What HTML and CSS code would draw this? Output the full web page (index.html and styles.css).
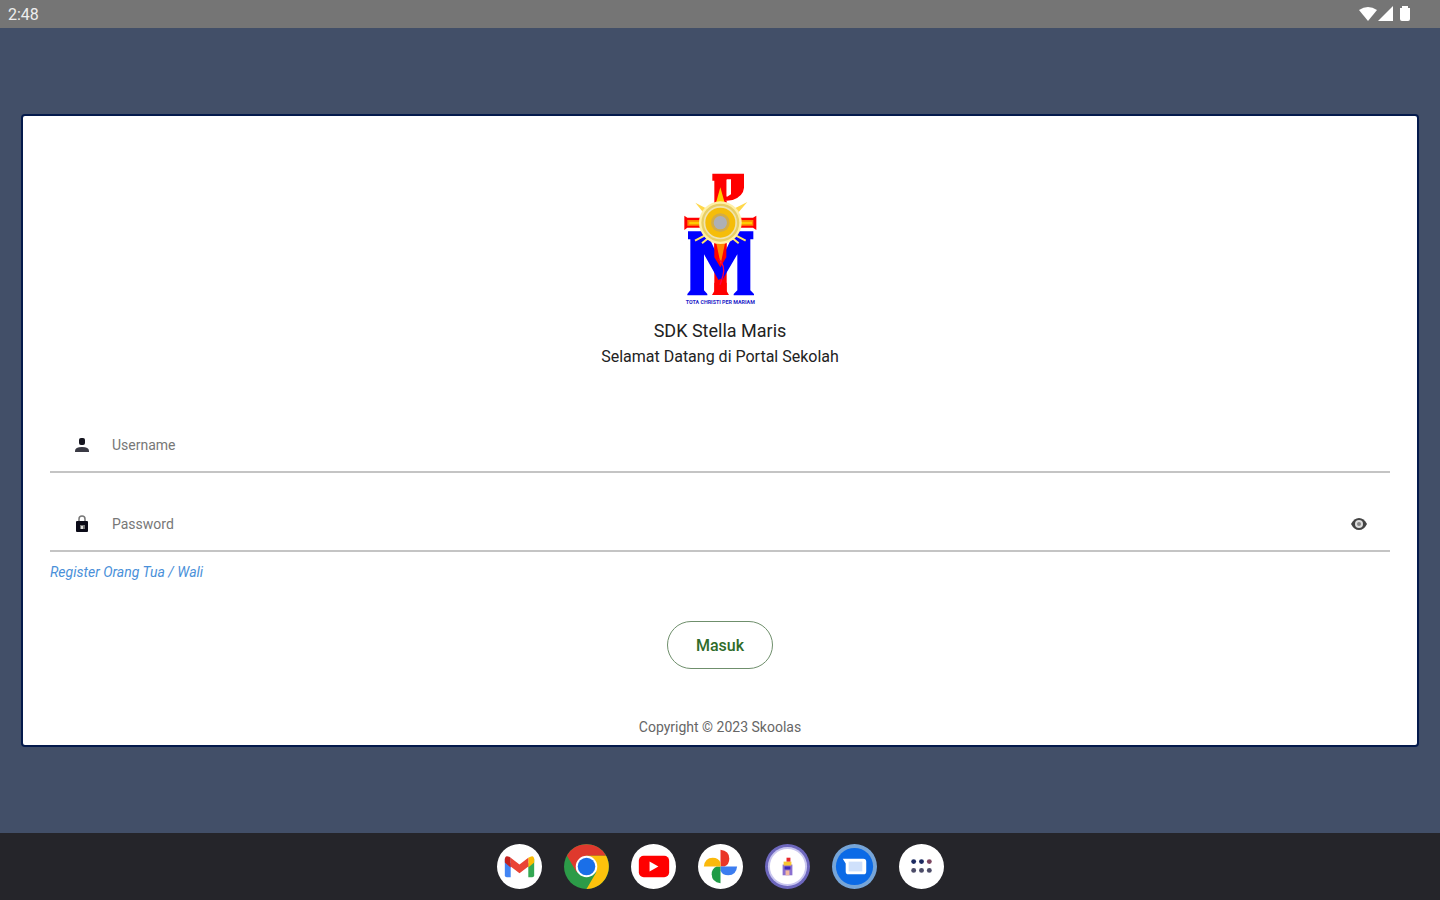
FILE: index.html
```html
<!DOCTYPE html>
<html lang="id">
<head>
  <meta charset="UTF-8" />
  <meta name="viewport" content="width=device-width, initial-scale=1.0" />
  <title>SDK Stella Maris</title>
  <link rel="stylesheet" href="styles.css">
</head>
<body>
  <header class="status-bar">
    <span>2:48</span>
    <svg class="status-icons" width="54" height="18" viewBox="0 0 54 18" fill="#fff">
      <path d="M1 5Q10-1 19 5L10 16z" />
      <path d="M35 1v15H20z" />
      <path d="M42 3h2V1h6v2h2v11q0 2-2 2h-6q-2 0-2-2z" />
    </svg>
  </header>

  <main>
    <form class="card">
      <svg class="logo" viewBox="69 36 222 408">
        <!-- cross and P -->
        <path fill="#f00" d="M157 41H252V83Q250 108 218 120L194 123V111Q210 106 211 94V60H200V400H163V62H157z" />
        <path fill="#fff" d="M200 58h13v45l-13 8z" />
        <path fill="#f00" d="M73 167l9 6h197l10-6v43l-10-7H82l-9 7z" />
        <path fill="#f80" d="M82 180h198v17H82z" />
        <path fill="#fc0" d="M88 185h188v8H88zM181 82l14 50h-28z" />
        <path fill="#ffd84a" d="M106 128l42 22-12 15zM262 126l-48 24 14 16z" />
        <!-- M -->
        <path fill="#00f" d="M84 214H139L181 306 224 214H280V238H271V391L282 402V406H221V402L232 391V283L181 370 132 283V391L142 402V406H82V402L91 391V238H84z" />
        <path fill="#f00" d="M163 246h36v46l-18 30-18-30zM163 369l18-13 19 13v24l7 12h-51l7-12z" />
        <path fill="#f80" d="M169 250h26l-13 62z" />
        <path d="M176 297q21 20 13 50-5 17-9 27" fill="none" stroke="#f04" stroke-width="4" />
        <!-- sun -->
        <path d="M105 242l30-16M126 250l22-18M257 242l-30-16M236 250l-22-18" stroke="#ffe36b" stroke-width="6" />
        <circle cx="181" cy="188" r="64" fill="#fff0a6" />
        <circle cx="181" cy="188" r="57" fill="#e8cf65" />
        <circle cx="181" cy="188" r="50" fill="#efe4b2" />
        <circle cx="181" cy="188" r="45" fill="#f5bd0a" />
        <circle cx="181" cy="188" r="28" fill="#d3ac45" />
        <circle cx="181" cy="188" r="20" fill="#aeb0b5" />
        <text class="motto" x="181" y="433" text-anchor="middle">TOTA CHRISTI PER MARIAM</text>
      </svg>
      <h1>SDK Stella Maris</h1>
      <p class="welcome">Selamat Datang di Portal Sekolah</p>

      <div class="field">
        <label for="username" aria-label="Username">
          <svg width="20" height="20" viewBox="0 0 20 20" fill="#15151f">
            <rect x="7" y="3" width="6" height="7" rx="2" />
            <path fill="#3a3a44" d="M3 17v-1q0-4 7-4t7 4v1z" />
          </svg>
        </label>
        <input type="text" id="username" placeholder="Username" />
      </div>
      <div class="field">
        <label for="password" aria-label="Password">
          <svg width="20" height="20" viewBox="0 0 20 20">
            <path d="M7 8V5q0-3 3-3t3 3v3" fill="none" stroke="#777" stroke-width="1.5" />
            <rect x="4" y="7" width="12" height="11" rx="1" fill="#0b0b18" />
            <path d="M8 11h5v4H8z" fill="#777" />
            <path d="M9 12h2v3H9z" fill="#ddd" />
          </svg>
        </label>
        <input type="password" id="password" placeholder="Password" />
        <button type="button" class="toggle" aria-label="Show password">
          <svg width="18" height="14" viewBox="0 0 18 14">
            <path d="M1 7Q4 1 9 1t8 6q-3 6-8 6T1 7z" fill="#444" />
            <circle cx="9" cy="7" r="4" fill="#ddd" />
            <circle cx="9" cy="7" r="2" fill="#888" />
          </svg>
        </button>
      </div>
      <a class="register" href="#">Register Orang Tua / Wali</a>
      <button type="button" class="submit">Masuk</button>
      <p class="copyright">Copyright © 2023 Skoolas</p>
    </form>
  </main>

  <nav class="dock">
    <a href="#" aria-label="Gmail">
      <svg viewBox="0 0 46 46">
        <circle cx="23" cy="23" r="23" fill="#fff" />
        <path fill="#4285f4" d="M8 15l6 5v14H10q-2 0-2-2z" />
        <path fill="#34a853" d="M32 20l6-5v17q0 2-2 2h-4z" />
        <path fill="#fbbc04" d="M32 14q6-4 6 2v3l-6 5z" />
        <path fill="#ea4335" d="M14 14l9 7 9-7v9l-9 7-9-7z" />
        <path fill="#c5221f" d="M14 14q-6-4-6 2v3l6 5z" />
      </svg>
    </a>
    <a href="#" aria-label="Chrome">
      <svg viewBox="0 0 46 46">
        <circle cx="23" cy="23" r="23" fill="#2c9b48" />
        <path fill="#df392d" d="M3 12A23 23 0 0 1 43 12H23L13 29z" />
        <path fill="#fcc20c" d="M23 12H43A23 23 0 0 1 23 46L33 29z" />
        <circle cx="23" cy="23" r="11" fill="#fff" />
        <circle cx="23" cy="23" r="9" fill="#1a6fe8" />
      </svg>
    </a>
    <a href="#" aria-label="YouTube">
      <svg viewBox="0 0 46 46">
        <circle cx="23" cy="23" r="23" fill="#fff" />
        <rect x="8" y="12" width="31" height="22" rx="5" fill="#f00" />
        <path fill="#fff" d="M19 18l9 5-9 5z" />
      </svg>
    </a>
    <a href="#" aria-label="Photos">
      <svg viewBox="0 0 46 46">
        <circle cx="23" cy="23" r="23" fill="#fff" />
        <path fill="#ea3527" d="M23 23V6q9 1 9 9 0 6-5 8z" />
        <path fill="#3c7df0" d="M23 23H40q-1 9-9 9-6 0-8-5z" />
        <path fill="#1e9b45" d="M23 23V40q-9-1-9-9 0-6 5-8z" />
        <path fill="#fbb90c" d="M23 23H6q1-9 9-9 6 0 8 5z" />
      </svg>
    </a>
    <a href="#" aria-label="Skoolas">
      <svg viewBox="0 0 46 46">
        <circle cx="23" cy="23" r="23" fill="#6d67bd" />
        <circle cx="23" cy="23" r="20" fill="#c9c6ef" />
        <circle cx="23" cy="23" r="18" fill="#fff" />
        <path fill="#8a6fd0" d="M18 21h10v11H18z" />
        <path fill="#3d29b8" d="M20 23h6v3h-6z" />
        <path fill="#f2b9a0" d="M21 27h4v5h-4z" />
        <path fill="#f8c630" d="M19 18h8v4h-8z" />
        <path fill="#e8262a" d="M22 14h4v4h-4z" />
      </svg>
    </a>
    <a href="#" aria-label="Messages">
      <svg viewBox="0 0 46 46">
        <circle cx="23" cy="23" r="23" fill="#76a5d8" />
        <circle cx="23" cy="23" r="19" fill="#0b6ae6" />
        <path fill="#fff" d="M11 15h21q3 0 3 3v10q0 3-3 3H17q-3 0-3-3v-8z" />
        <rect x="17" y="18" width="14" height="10" fill="#cfe0fb" />
      </svg>
    </a>
    <a href="#" aria-label="Apps">
      <svg viewBox="0 0 46 46">
        <circle cx="23" cy="23" r="23" fill="#fff" />
        <g fill="#1c2a60">
          <circle cx="15" cy="18" r="2.5" />
          <circle cx="23" cy="18" r="2.5" />
          <circle cx="31" cy="18" r="2.5" fill="#7c4560" />
        </g>
        <g fill="#4c4c68">
          <circle cx="15" cy="27" r="2.5" />
          <circle cx="23" cy="27" r="2.5" />
          <circle cx="31" cy="27" r="2.5" />
        </g>
      </svg>
    </a>
  </nav>
</body>
</html>
```

FILE: styles.css
```css
* { box-sizing: border-box; }
body {
  display: flex;
  flex-direction: column;
  min-height: 100vh;
  margin: 0;
  font-family: Roboto, sans-serif;
  background-color: #424f68;
}
svg { display: block; }
h1, p { margin: 0; }
.status-bar {
  display: flex;
  justify-content: space-between;
  align-items: center;
  height: 28px;
  padding: 0 28px 0 8px;
  font-size: 16px;
  color: #eee;
  background-color: #757575;
}
main {
  flex: 1;
  display: flex;
  align-items: center;
  padding: 23px;
}
.card {
  flex: 1;
  display: flex;
  flex-direction: column;
  align-items: center;
  padding: 56px 27px 8px;
  border-radius: 2px;
  background-color: #fff;
  box-shadow: 0 0 0 2px #041a4c;
}
.logo {
  width: 74px;
  height: 136px;
}
.motto {
  font-size: 16px;
  font-weight: bold;
  fill: #2222c8;
}
h1 {
  margin-top: 10px;
  font-size: 18px;
  font-weight: normal;
  line-height: 26px;
  color: #222;
}
.welcome {
  font-size: 16px;
  line-height: 26px;
  color: #222;
}
.field {
  display: flex;
  align-items: center;
  align-self: stretch;
  height: 55px;
  margin-bottom: 24px;
  padding: 0 22px;
  border-bottom: 2px solid #c4c4c4;
}
.welcome + .field { margin-top: 48px; }
.field label { margin-right: 20px; }
.field input {
  flex: 1;
  padding: 0;
  border: 0;
  outline: 0;
  font-family: inherit;
  font-size: 14px;
  color: #222;
  background: none;
}
.field input::placeholder { color: #777; }
.toggle {
  padding: 0;
  border: 0;
  background: none;
}
.register {
  align-self: flex-start;
  margin-top: -14px;
  font-size: 14px;
  font-style: italic;
  line-height: 20px;
  color: #4a90d9;
  text-decoration: none;
}
.submit {
  width: 106px;
  height: 48px;
  margin: 39px 0 48px;
  border: 1px solid #6f8f6c;
  border-radius: 24px;
  font-family: inherit;
  font-size: 16px;
  font-weight: 500;
  color: #2f6b2a;
  background: none;
}
.copyright {
  font-size: 14px;
  line-height: 20px;
  color: #666;
}
.dock {
  display: flex;
  justify-content: center;
  align-items: center;
  gap: 22px;
  height: 67px;
  background-color: #25252a;
}
.dock svg {
  width: 45px;
  height: 45px;
}
```
